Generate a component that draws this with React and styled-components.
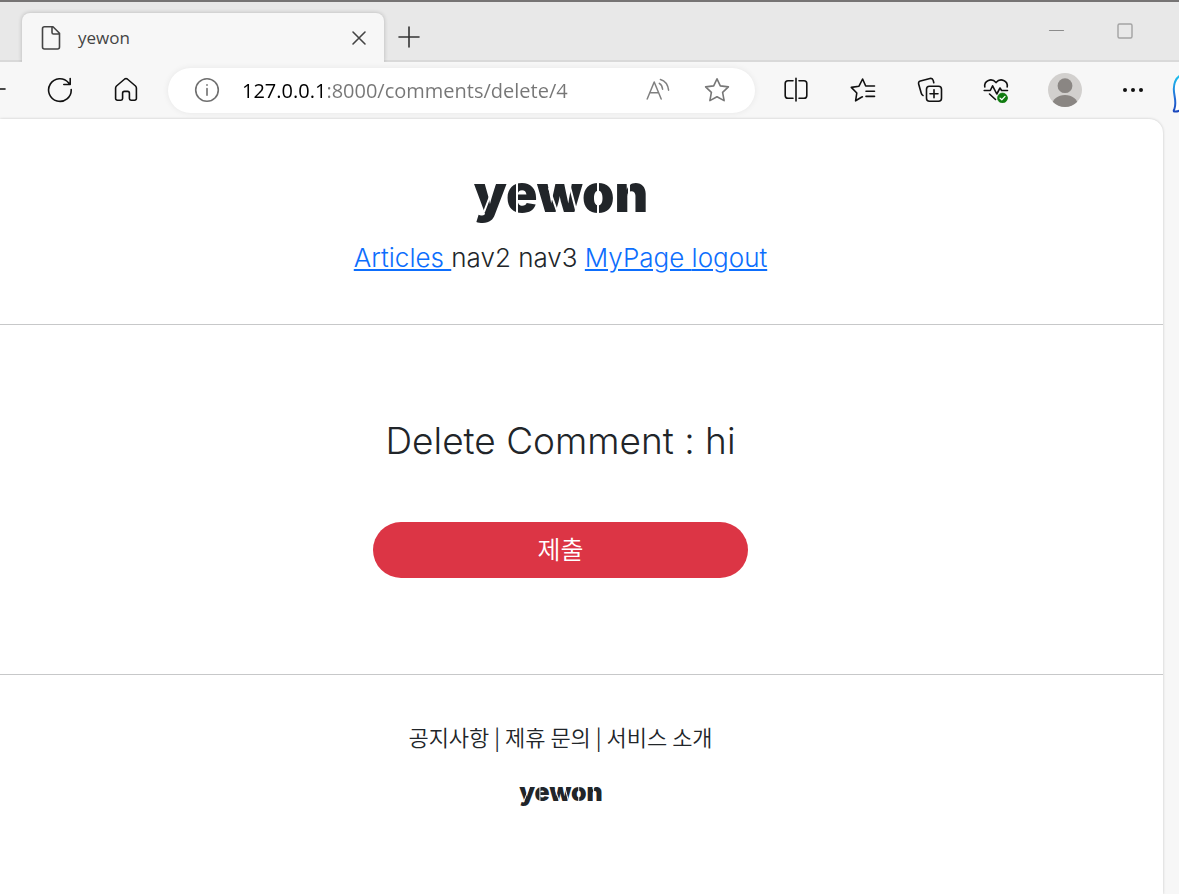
import React from 'react';
import styled, { createGlobalStyle } from 'styled-components';

const GlobalStyle = createGlobalStyle`
	* {
		box-sizing: border-box;
	}

	body {
		margin: 0;
		background: #f7f7f7;
		color: #212529;
		font-family: Inter, "Noto Sans CJK KR", sans-serif;
		font-weight: 300;
	}
`;

const Window = styled.div`
	min-height: 100vh;
	display: flex;
	flex-direction: column;
	overflow: hidden;
`;

/* ---------- tab strip ---------- */

const TabStrip = styled.div`
	display: flex;
	height: 62px;
	padding-top: 11px;
	border-top: 2px solid #767474;
	background: #e8e8e8;
`;

const StripEdge = styled.div`
	flex: ${(props) => (props.$grow ? '1' : '0 0 22px')};
	display: flex;
	justify-content: space-between;
	margin-top: -11px;
	padding-top: 11px;
	border-bottom: 2px solid #d9d9d9;
`;

const StripEnd = styled.div`
	width: 20px;
`;

const Tab = styled.div`
	display: flex;
	background: #f7f7f7;
	flex: 0 0 362px;
	border-radius: 8px 8px 0 0;
	box-shadow: 0 0 4px rgba(0, 0, 0, 0.22);
	clip-path: inset(-4px -4px 0 -4px);
	align-items: center;
	padding: 0 14px 0 16px;
	gap: 14px;
`;

const TabTitle = styled.span`
	flex: 1;
	color: #444;
	font-family: "Open Sans", "Noto Sans", sans-serif;
	font-size: 17px;
	font-weight: 400;
	line-height: 24px;
`;

const PlainButton = styled.button`
	display: flex;
	align-items: center;
	justify-content: center;
	flex: 0 0 ${(props) => props.$width || 22}px;
	height: ${(props) => props.$height || 22}px;
	padding: 0;
	border: 0;
	background: none;
	cursor: pointer;
`;

const WindowButtons = styled.div`
	display: flex;
`;

/* ---------- toolbar ---------- */

const Toolbar = styled.div`
	display: flex;
	align-items: center;
	height: 57px;
	padding-bottom: 1px;
	background: #f7f7f7;
`;

const AddressBar = styled.form`
	flex: 1;
	min-width: 0;
	display: flex;
	align-items: center;
	height: 45px;
	margin: 0 8px 0 9px;
	padding: 0 8px 0 22px;
	border-radius: 23px;
	background: #fff;
	box-shadow: 0 0 6px rgba(0, 0, 0, 0.07);
`;

const AddressInput = styled.input`
	flex: 1;
	min-width: 0;
	height: 32px;
	margin-left: 18px;
	padding: 0;
	border: 0;
	outline: 0;
	font-family: "Open Sans", "Noto Sans", sans-serif;
	font-size: 20px;
	color: #767676;
	background: linear-gradient(90deg, #000 85px, #767676 85px);
	background-clip: text;
	-webkit-background-clip: text;
	-webkit-text-fill-color: transparent;
`;

/* ---------- page ---------- */

const Page = styled.div`
	flex: 1;
	margin-right: 16px;
	background: #fff;
	border-radius: 0 14px 0 0;
	box-shadow: 0 0 3px rgba(0, 0, 0, 0.2);
`;

const Section = styled.section`
	display: flex;
	flex-direction: column;
	align-items: center;
	padding: ${(props) => props.$pad};
	border-bottom: ${(props) => (props.$line ? '1px solid #c7c8c9' : '0')};
`;

const BrandMark = styled.svg`
	display: block;
	width: ${(props) => props.$width}px;
	height: auto;
	margin-top: ${(props) => props.$gap || 0}px;

	text {
		fill: #212529;
		font-family: Inter, sans-serif;
		font-size: 52px;
		font-weight: 900;
	}

	path {
		fill: none;
		stroke: #fff;
		stroke-width: 2;
	}
`;

const Nav = styled.nav`
	font-size: 26px;
	line-height: 40px;
`;

const NavLink = styled.a`
	color: #0d6efd;
	text-decoration: underline;
	white-space: pre;
`;

const Title = styled.h1`
	margin: 0;
	font-size: 37px;
	font-weight: 300;
	line-height: 48px;
`;

const DeleteForm = styled.form`
	width: 375px;
	margin-top: 57px;
`;

const SubmitButton = styled.button`
	width: 100%;
	height: 56px;
	padding: 0 0 4px;
	border: 0;
	border-radius: 28px;
	background: #dc3545;
	color: #fff;
	font-family: "Noto Sans CJK KR", sans-serif;
	font-size: 25px;
	font-weight: 350;
	cursor: pointer;
`;

const FooterText = styled.p`
	margin: 0;
	font-family: "Noto Sans CJK KR", sans-serif;
	font-size: 22px;
	font-weight: 350;
	line-height: 32px;
`;

/* ---------- icons ---------- */

const Svg = styled.svg`
	display: block;
	flex: none;
	fill: none;
	stroke: ${(props) => props.$color || '#111'};
	stroke-width: ${(props) => props.$stroke || 1.6};
	stroke-linecap: round;
	stroke-linejoin: round;
`;

const Icon = ({ size = 26, color, stroke, children }) => (
	<Svg width={size} height={size} viewBox={`0 0 ${size} ${size}`} $color={color} $stroke={stroke} aria-hidden="true">
		{children}
	</Svg>
);

const starPath = 'M13 1.8 L16.3 8.9 L24.4 9.9 L18.6 15.4 L20.1 23.6 L13 19.8 L5.9 23.6 L7.4 15.4 L1.6 9.9 L9.7 8.9 Z';

// stencil lettering: heavy text with thin gaps cut through the strokes
const Brand = ({ width, gap }) => (
	<BrandMark $width={width} $gap={gap} viewBox="0 0 192 80">
		<text x="96" y="54" textAnchor="middle">yewon</text>
		<path d="M19 54 L30 25 M52 24 V56 M84 30 L93 56 M104 25 L112 56 M133 24 V56 M164 24 V56" />
	</BrandMark>
);

const TabBar = () => (
	<TabStrip>
		<StripEdge />
		<Tab>
			<Icon color="#444">
				<path d="M6.5 1.8 H15 L21.5 8.3 V22 a2 2 0 0 1 -2 2 H6.5 a2 2 0 0 1 -2 -2 V3.8 a2 2 0 0 1 2 -2 Z M14 2 V7.5 a1.5 1.5 0 0 0 1.5 1.5 H21.3" />
			</Icon>
			<TabTitle>yewon</TabTitle>
			<PlainButton aria-label="Close tab">
				<Icon size={22} color="#444">
					<path d="M5 5 L17 17 M17 5 L5 17" />
				</Icon>
			</PlainButton>
		</Tab>
		<StripEdge $grow>
			<PlainButton $width={50} $height={48} aria-label="New tab">
				<Icon color="#333">
					<path d="M13 3 V23 M3 13 H23" />
				</Icon>
			</PlainButton>
			<WindowButtons>
				<PlainButton $width={68} $height={36} aria-label="Minimize">
					<Icon size={18} color="#8c8c8c" stroke={1.2}>
						<path d="M1.5 8.5 H15.5" />
					</Icon>
				</PlainButton>
				<PlainButton $width={68} $height={36} aria-label="Maximize">
					<Icon size={18} color="#a3a3a3" stroke={1.4}>
						<rect x="2" y="2" width="14" height="14" rx="1.5" />
					</Icon>
				</PlainButton>
				<StripEnd />
			</WindowButtons>
		</StripEdge>
	</TabStrip>
);

const AddressTools = () => (
	<Toolbar>
		<PlainButton $width={27} aria-label="Back">
			<Svg width="27" height="26" viewBox="0 0 27 26" aria-hidden="true">
				<path d="M-8 12 H5" />
			</Svg>
		</PlainButton>
		<PlainButton $width={66} aria-label="Refresh">
			<Icon>
				<path d="M24.2 12.5 A11.3 11.3 0 1 1 21.5 5.7 L22.6 7.2 M23.2 1.5 V7.5 H16.8" />
			</Icon>
		</PlainButton>
		<PlainButton $width={66} aria-label="Home">
			<Icon>
				<path d="M11.7 2 Q13 1 14.3 2 L22.5 9 Q23.4 9.9 23.4 11 V21.4 a1.8 1.8 0 0 1 -1.8 1.8 H18 a1.6 1.6 0 0 1 -1.6 -1.6 V16.2 a1.8 1.8 0 0 0 -1.8 -1.8 H11.4 a1.8 1.8 0 0 0 -1.8 1.8 V21.6 a1.6 1.6 0 0 1 -1.6 1.6 H4.4 a1.8 1.8 0 0 1 -1.8 -1.8 V11 Q2.6 9.9 3.5 9 Z" />
			</Icon>
		</PlainButton>
		<AddressBar onSubmit={(e) => e.preventDefault()}>
			<PlainButton type="button" $width={34} aria-label="Site information">
				<Icon color="#6f6f6f">
					<circle cx="13" cy="13" r="11.3" />
					<path d="M13 11.5 V18.3 M13 7.8 V8.2" />
				</Icon>
			</PlainButton>
			<AddressInput aria-label="Address" defaultValue="127.0.0.1:8000/comments/delete/4" spellCheck="false" />
			<PlainButton type="button" $width={60} aria-label="Read aloud">
				<Icon color="#808080" stroke={1.5}>
					<path d="M3.2 22 L10.2 5 L17.2 22 M5.8 15.8 H14.6 M15.3 6.3 Q18.3 8 18.6 12.3 M16.4 2.5 Q23.5 4.5 24.6 13.2" />
				</Icon>
			</PlainButton>
			<PlainButton type="button" $width={60} aria-label="Add to favorites">
				<Icon color="#777">
					<path d={starPath} />
				</Icon>
			</PlainButton>
		</AddressBar>
		<PlainButton $width={66} aria-label="Split screen">
			<Icon>
				<path d="M10 3.8 H5 a2.8 2.8 0 0 0 -2.8 2.8 V18.4 a2.8 2.8 0 0 0 2.8 2.8 H10 M16 3.8 H21 a2.8 2.8 0 0 1 2.8 2.8 V18.4 a2.8 2.8 0 0 1 -2.8 2.8 H16 M13 1.2 V24" />
			</Icon>
		</PlainButton>
		<PlainButton $width={68} aria-label="Favorites">
			<Icon>
				<path d="M11 20.5 L5.6 23.8 L6.8 16 L1.3 10.4 L9 9.2 L12.6 2 L15.7 9 H24.5 M16 14.3 H24.5 M16 19.4 H24.5 M11 20.5 L12.4 19.8" />
			</Icon>
		</PlainButton>
		<PlainButton $width={66} aria-label="Collections">
			<Icon>
				<rect x="9.5" y="9.3" width="15" height="15" rx="3" />
				<path d="M17 12.8 V20.8 M13 16.8 H21 M6 18.5 Q4.8 18.2 4.2 16 L1.7 7.2 Q1 4.6 3.4 4 L13 1.5 Q15.5 1 16.2 3.4 L16.8 5.8" />
			</Icon>
		</PlainButton>
		<PlainButton $width={66} aria-label="Browser essentials">
			<Icon>
				<path d="M1.8 10 C0.8 3.6 8.6 0.4 13 5.6 C17.4 0.4 25.2 3.6 24.2 10 M1.2 13.5 H7.3 L9.6 8.8 L13.8 17 L17 11 L18.6 13.5 H24.5 M6.5 17 L12.5 22.5" />
				<circle cx="19.5" cy="21" r="5" fill="#107c10" stroke="#107c10" strokeWidth="0.6" />
				<path d="M17 21.1 L18.8 22.8 L22 19.4" stroke="#fff" strokeWidth="1.3" />
			</Icon>
		</PlainButton>
		<PlainButton $width={71} $height={34} aria-label="Profile">
			<Svg width="34" height="34" viewBox="0 0 34 34" aria-hidden="true">
				<clipPath id="avatar">
					<circle cx="17" cy="17" r="17" />
				</clipPath>
				<g clipPath="url(#avatar)" stroke="none">
					<rect width="34" height="34" fill="#d2d0ce" />
					<circle cx="17" cy="12.7" r="7.4" fill="#8a8683" />
					<ellipse cx="17" cy="32.5" rx="13" ry="10.5" fill="#8a8683" />
				</g>
			</Svg>
		</PlainButton>
		<PlainButton $width={65} aria-label="Settings and more">
			<Icon>
				<g fill="#111" stroke="none">
					<circle cx="5" cy="13" r="2" />
					<circle cx="13" cy="13" r="2" />
					<circle cx="21" cy="13" r="2" />
				</g>
			</Icon>
		</PlainButton>
		<PlainButton $width={14} $height={48} aria-label="Copilot">
			<Svg width="14" height="48" viewBox="0 0 14 48" $stroke={2} aria-hidden="true">
				<defs>
					<linearGradient id="copilot" x1="0" y1="0" x2="0" y2="1">
						<stop offset="0" stopColor="#1cc4ee" />
						<stop offset="0.6" stopColor="#2370d8" />
						<stop offset="1" stopColor="#1b48bd" />
					</linearGradient>
				</defs>
				<path d="M16 9 Q9 13 8.8 23 C8.8 30 12 36 9.4 43 Q8 45.5 9.5 45.5 Q13 46 18 43" fill="#fff" stroke="url(#copilot)" />
			</Svg>
		</PlainButton>
	</Toolbar>
);

const App = () => {
	return (
		<Window>
			<GlobalStyle />
			<TabBar />
			<AddressTools />
			<Page>
				<Section as="header" $line $pad="39px 42px 46px 0">
					<Brand width={192} />
					<Nav>
						<NavLink href="#articles">{'Articles '}</NavLink>
						nav2 nav3{' '}
						<NavLink href="#mypage">{'MyPage '}</NavLink>
						<NavLink href="#logout">logout</NavLink>
					</Nav>
				</Section>
				<Section as="main" $line $pad="92px 42px 96px 0">
					<Title>Delete Comment : hi</Title>
					<DeleteForm onSubmit={(e) => e.preventDefault()}>
						<SubmitButton type="submit">제출</SubmitButton>
					</DeleteForm>
				</Section>
				<Section as="footer" $pad="45px 42px 44px 0">
					<FooterText>공지사항 | 제휴 문의 | 서비스 소개</FooterText>
					<Brand width={92} gap={23} />
				</Section>
			</Page>
		</Window>
	);
};

export default App;
